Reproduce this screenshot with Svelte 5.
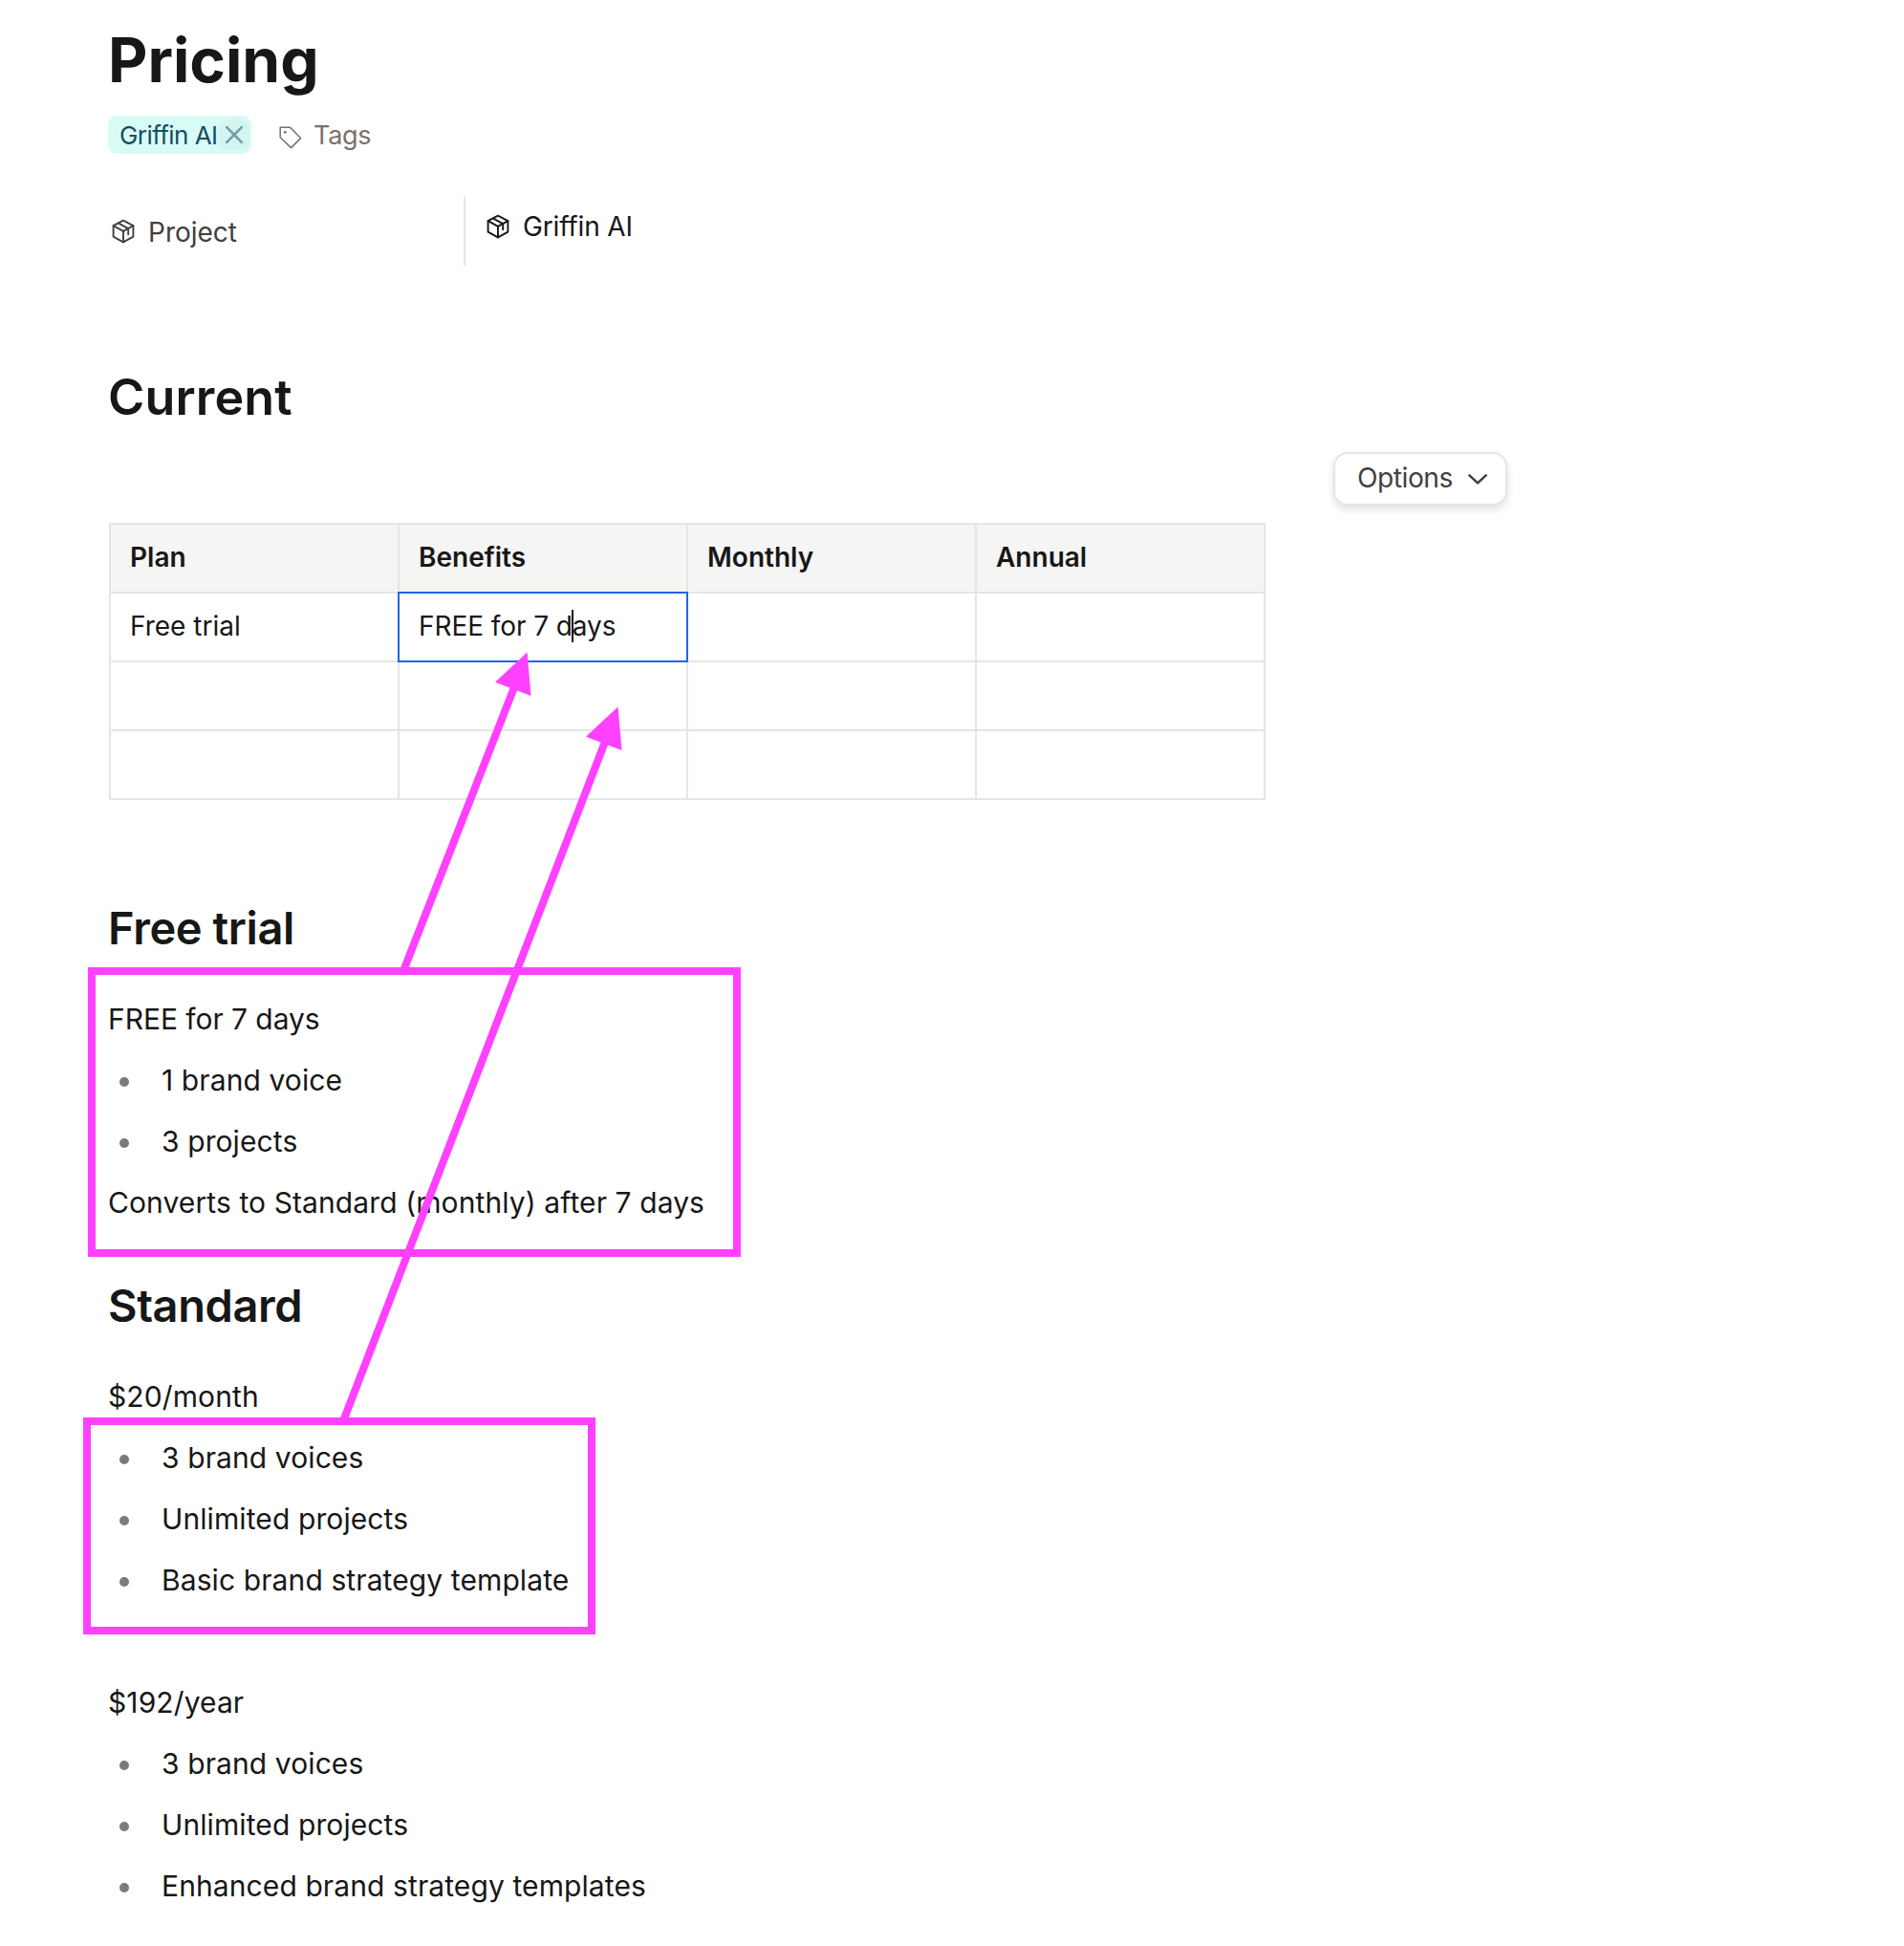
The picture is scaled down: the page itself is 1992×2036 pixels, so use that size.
<script lang="ts">
	const columns = ['Plan', 'Benefits', 'Monthly', 'Annual'];

	const rows = [
		['Free trial', 'FREE for 7 days', '', ''],
		['', '', '', ''],
		['', '', '', '']
	];

	// position of the text cursor inside the table
	const selected = { row: 0, column: 1, offset: 12 };

	const standardPlans = [
		{
			price: '$20/month',
			benefits: ['3 brand voices', 'Unlimited projects', 'Basic brand strategy template']
		},
		{
			price: '$192/year',
			benefits: ['3 brand voices', 'Unlimited projects', 'Enhanced brand strategy templates']
		}
	];

	function isSelected(row: number, column: number) {
		return row === selected.row && column === selected.column;
	}
</script>

{#snippet box()}
	<svg class="icon" viewBox="0 0 24 26" fill="none" stroke="currentColor">
		<path d="M12 1.6 22.4 7.2V18.6L12 24.4 1.6 18.6V7.2Z" />
		<path d="M1.6 7.2 12 12.8 22.4 7.2M12 12.8V24.4" />
		<path d="M6.8 4.4 17.2 10.1V16.2" />
	</svg>
{/snippet}

<main class="document">
	<h1 class="title">Pricing</h1>

	<div class="tags">
		<span class="tag">
			Griffin AI
			<button class="tag__remove" aria-label="Remove tag">
				<svg viewBox="0 0 18 18" fill="none" stroke="currentColor">
					<path d="M1.2 1.2 16.8 16.8M16.8 1.2 1.2 16.8" />
				</svg>
			</button>
		</span>
		<span class="tags__add">
			<svg viewBox="0 0 24 24" fill="none" stroke="currentColor">
				<path d="M1.2 1.2H11.5L22.5 12.6 12.6 22.6 1.2 11.8Z" />
				<circle cx="6.3" cy="6.3" r="1.4" fill="currentColor" stroke="none" />
			</svg>
			Tags
		</span>
	</div>

	<div class="property">
		<div class="property__name">{@render box()}Project</div>
		<div class="property__value">{@render box()}Griffin AI</div>
	</div>

	<h2 class="section">Current</h2>

	<div class="toolbar">
		<button class="options">
			Options
			<svg viewBox="0 0 20 11" fill="none" stroke="currentColor">
				<path d="M1.4 1.4 10 9.4 18.6 1.4" />
			</svg>
		</button>
	</div>

	<table>
		<thead>
			<tr>
				{#each columns as column}
					<th>{column}</th>
				{/each}
			</tr>
		</thead>
		<tbody>
			{#each rows as row, i}
				<tr>
					{#each row as cell, j}
						{#if isSelected(i, j)}
							<td class="selected"
								>{cell.slice(0, selected.offset)}<span class="cursor"></span>{cell.slice(
									selected.offset
								)}</td
							>
						{:else}
							<td>{cell}</td>
						{/if}
					{/each}
				</tr>
			{/each}
		</tbody>
	</table>

	<h3 class="free-trial">Free trial</h3>
	<p class="lead">FREE for 7 days</p>
	<ul>
		<li>1 brand voice</li>
		<li>3 projects</li>
	</ul>
	<p>Converts to Standard (monthly) after 7 days</p>

	<h3>Standard</h3>
	{#each standardPlans as plan}
		<div class="plan">
			<p>{plan.price}</p>
			<ul>
				{#each plan.benefits as benefit}
					<li>{benefit}</li>
				{/each}
			</ul>
		</div>
	{/each}

	<svg class="annotations" viewBox="0 0 1992 2036" fill="none">
		<rect x="96" y="1016" width="675" height="295" />
		<rect x="91" y="1487" width="528" height="219" />
		<path d="M422 1016 540 714" />
		<path d="M359 1487 635 771" />
		<polygon points="551.5,682.5 518,713.7 555.5,728" />
		<polygon points="646.5,739.5 613,770.7 650.5,785" />
	</svg>
</main>

<style>
	:global(body) {
		background: #fff;
	}

	.document {
		position: relative;
		box-sizing: border-box;
		width: 1992px;
		height: 2036px;
		padding: 23px 0 0 113px;
		overflow: hidden;
		color: #171717;
		font-family: Inter, sans-serif;
		font-size: 30px;
	}

	h1,
	h2,
	h3,
	p,
	ul {
		margin: 0;
	}

	button {
		padding: 0;
		border: none;
		font-family: inherit;
	}

	.title {
		font-size: 64px;
		font-weight: 700;
		line-height: 80px;
	}

	.tags {
		display: flex;
		align-items: center;
		height: 40px;
		margin-top: 18px;
	}

	.tag {
		display: flex;
		align-items: center;
		justify-content: space-between;
		box-sizing: border-box;
		width: 150px;
		height: 40px;
		padding: 0 2px 0 12px;
		border-radius: 9px;
		background: #d9fbf5;
		color: #134e64;
		font-size: 26px;
		letter-spacing: -0.55px;
		white-space: nowrap;
	}

	.tag__remove {
		display: flex;
		flex-shrink: 0;
		align-items: center;
		justify-content: center;
		width: 32px;
		height: 32px;
		border-radius: 10px;
		background: #d4f4ef;
		color: #739da8;
	}

	.tag__remove svg {
		width: 18px;
		height: 18px;
		stroke-width: 2.6;
		stroke-linecap: round;
	}

	.tags__add {
		display: flex;
		align-items: center;
		gap: 12px;
		margin-left: 29px;
		color: #79716b;
		font-size: 27px;
		letter-spacing: -0.3px;
	}

	.tags__add svg {
		width: 24px;
		height: 24px;
		margin-top: 5px;
		stroke-width: 1.5;
		stroke-linejoin: round;
	}

	.property {
		display: flex;
		height: 72px;
		margin-top: 45px;
		font-size: 28px;
	}

	.property__name,
	.property__value {
		display: flex;
		align-items: center;
		gap: 14px;
	}

	.property__name {
		width: 368px;
		padding: 1px 0 0 4px;
		border-right: 2px solid #e5e5e5;
		color: #404040;
	}

	.property__name .icon {
		margin-bottom: 2px;
	}

	.property__value {
		height: 62px;
		padding-left: 22px;
		letter-spacing: -0.15px;
	}

	.icon {
		width: 24px;
		height: 26px;
		stroke-width: 1.9;
		stroke-linejoin: round;
		stroke-linecap: round;
	}

	.section {
		margin-top: 106px;
		font-size: 52px;
		font-weight: 600;
		letter-spacing: 0.15px;
		line-height: 64px;
	}

	.toolbar {
		display: flex;
		justify-content: flex-end;
		width: 1464px;
		margin-top: 25px;
	}

	.options {
		display: flex;
		align-items: center;
		gap: 16px;
		box-sizing: border-box;
		width: 182px;
		height: 56px;
		padding: 0 0 2px 23px;
		border: 2px solid #e5e5e5;
		border-radius: 15px;
		background: #fff;
		color: #404040;
		font-size: 28px;
		letter-spacing: -0.4px;
		box-shadow: 0 4px 8px rgba(0, 0, 0, 0.12);
	}

	.options svg {
		width: 20px;
		height: 11px;
		margin-top: 2px;
		stroke-width: 2.5;
		stroke-linecap: round;
		stroke-linejoin: round;
	}

	table {
		width: 1210px;
		margin: 18px 0 0 1px;
		border-collapse: collapse;
		table-layout: fixed;
		font-size: 28px;
	}

	th,
	td {
		box-sizing: border-box;
		height: 72px;
		padding: 0 20px 2px;
		border: 2px solid #e5e5e5;
		text-align: left;
	}

	th {
		background: #f5f5f4;
		font-weight: 600;
	}

	.selected {
		border: 2px double #2563eb;
		letter-spacing: -0.07px;
	}

	.cursor {
		position: absolute;
		width: 2px;
		height: 34px;
		margin-left: -1px;
		background: #171717;
	}

	h3 {
		margin: 46px 0 33px;
		font-size: 47px;
		font-weight: 600;
		letter-spacing: -0.4px;
		line-height: 60px;
	}

	.free-trial {
		margin-top: 104px;
	}

	p,
	li {
		letter-spacing: 0.1px;
		line-height: 64px;
	}

	.lead {
		letter-spacing: -0.05px;
	}

	ul {
		padding: 0;
		list-style: none;
	}

	li {
		display: flex;
		align-items: center;
	}

	li::before {
		content: '';
		width: 10px;
		height: 10px;
		margin: 4px 34px 0 12px;
		border-radius: 50%;
		background: #7b7b7b;
	}

	.plan + .plan {
		margin-top: 64px;
	}

	/* markup drawn on top of the document */
	.annotations {
		position: absolute;
		top: 0;
		left: 0;
		width: 1992px;
		height: 2036px;
		stroke: #ff40ff;
		stroke-width: 8;
		pointer-events: none;
	}

	.annotations path {
		stroke-linecap: round;
	}

	.annotations polygon {
		fill: #ff40ff;
		stroke: none;
	}
</style>
